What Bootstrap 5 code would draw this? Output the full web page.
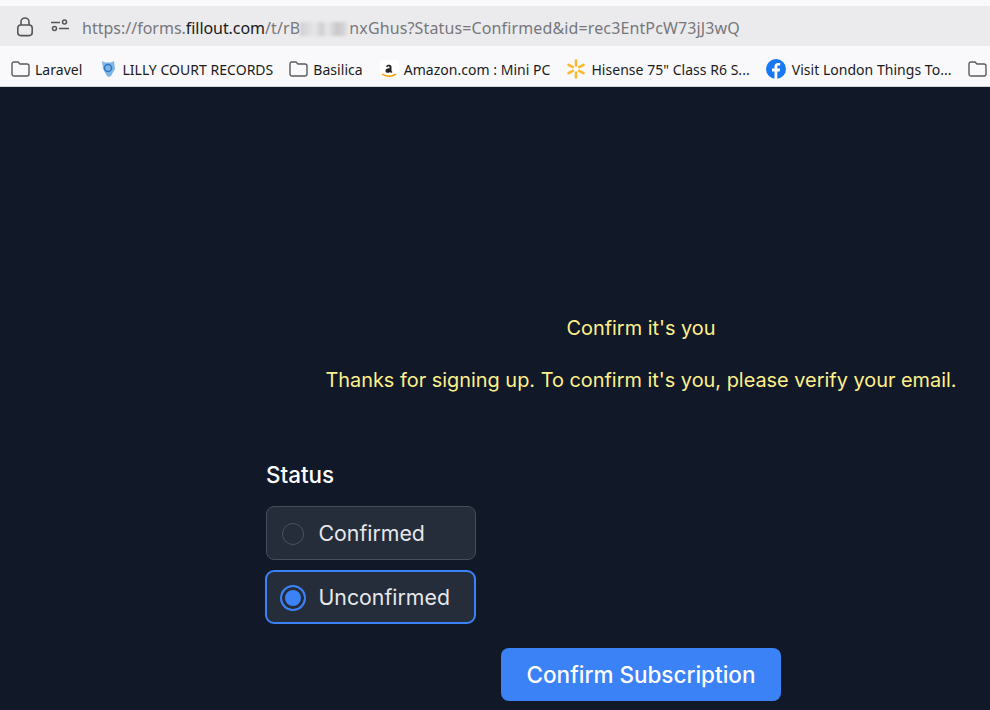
<!DOCTYPE html>
<html lang="en">
<head>
<meta charset="utf-8">
<title>Confirm it's you</title>
<link href="https://cdn.jsdelivr.net/npm/bootstrap@5.3.0/dist/css/bootstrap.min.css" rel="stylesheet">
<style>
html,body{height:710px;overflow:hidden}
body{background:#111827;font-family:"Inter",sans-serif}
.top-strip{height:6px;background:#f9f9fb}
.addr-bar{height:40px;background:#ebebed;padding-left:16px;font-family:"Noto Sans",sans-serif;font-size:16px;color:#77777c;white-space:nowrap}
.addr-bar svg{flex:none}
.addr-url{margin-left:13px;padding-top:3px;letter-spacing:.13px}
.url-start{letter-spacing:0}
.addr-url b{font-weight:400;color:#1a1a1c;letter-spacing:-.07px}
.blurred{display:inline-block;width:49px;height:14px;vertical-align:-2px;background:linear-gradient(90deg,#d0d0d2,#e6e6e8 30%,#cdcdcf 45%,#e8e8ea 55%,#c8c8ca 75%,#d4d4d6 90%,#ebebed);filter:blur(1.5px)}
.marks{height:41px;background:#f9f9fb;border-bottom:1px solid #d4d4d6;padding-left:11px;padding-top:6px;font-family:"Noto Sans",sans-serif;font-size:14px;letter-spacing:.03px;color:#1b1b1d;white-space:nowrap;overflow:hidden}
.mark-item{margin-right:16px;gap:5px}
.mark-first{margin-right:18px}
.mark-lilly{gap:6px}
.mark-basilica{margin-right:17px}
.mark-fb{gap:6px}
.form-col{width:750px;margin-left:266px;padding-top:227px;color:#fff}
.msg{color:#fef08a;font-size:19.9px;line-height:28px;text-align:center}
.msg-head{margin-bottom:24px}
.msg-body{margin-bottom:65px}
.field-label{line-height:32px;font-weight:500;margin-bottom:15px;color:#fff;font-size:22.4px}
.opt{width:210px;height:54px;background:#252c3a;border:1px solid #474d59;border-radius:8px;padding-left:15px;padding-top:1px;gap:14.500px;font-size:21.3px;color:#e5e7eb;margin-bottom:10px}
.opt-on{width:211px;margin-left:-1px;margin-bottom:11px;border:2px solid #3b82f6;border-radius:9px;padding-left:13px;gap:12.500px}
.dot{width:22px;height:22px;border:1px solid #4b515d;border-radius:50%;flex:none}
.dot-on{width:26px;height:26px;border:2px solid #3b82f6;background:#3b82f6;box-shadow:inset 0 0 0 3px #252c3a}
.go-btn{width:280px;height:53px;background:#3b82f6;border:0;border-color:#3b82f6;border-radius:8px;color:#fff;font-size:22.5px;font-weight:500;margin-left:235px;margin-top:13px;padding:0}
</style>
</head>
<body>
<div class="top-strip"></div>
<div class="addr-bar d-flex align-items-center">
  <svg width="19" height="21" viewBox="0 0 19 21" fill="none" stroke="#55555a" stroke-width="1.6"><rect x="1.8" y="9" width="14.4" height="10.6" rx="3"/><path d="M5 9V6a4 4 0 0 1 8 0v3"/></svg>
  <svg class="ms-3" width="18" height="14" viewBox="0 0 18 14" fill="none" stroke="#55555a" stroke-width="1.5"><circle cx="3.5" cy="9.5" r="2"/><circle cx="13.5" cy="3" r="2"/><path d="M0 3.5h9M8 9.5h10"/></svg>
  <span class="addr-url"><span class="url-start">https://forms.</span><b>fillout.com</b>/t/rB<span class="blurred"></span>nxGhus?Status=Confirmed&amp;id=rec3EntPcW73jJ3wQ</span>
</div>
<div class="marks d-flex align-items-center">
  <span class="mark-item mark-first d-inline-flex align-items-center"><svg width="19" height="16" viewBox="0 0 19 16" fill="none" stroke="#5b5b60" stroke-width="1.4"><path d="M1 13V3a2 2 0 0 1 2-2h4l2 2h7a2 2 0 0 1 2 2v8a2 2 0 0 1-2 2H3a2 2 0 0 1-2-2z"/></svg>Laravel</span>
  <span class="mark-item mark-lilly d-inline-flex align-items-center"><svg width="16" height="18" viewBox="0 0 16 18"><path d="M2 1l3 1.500h6l3-1.500 1 8-4 7-2 1-2-1-4-7z" fill="#7fb6e6"/><circle cx="8" cy="8" r="3.500" fill="none" stroke="#2f78c4" stroke-width="1.500"/></svg>LILLY COURT RECORDS</span>
  <span class="mark-item mark-basilica d-inline-flex align-items-center"><svg width="19" height="16" viewBox="0 0 19 16" fill="none" stroke="#5b5b60" stroke-width="1.4"><path d="M1 13V3a2 2 0 0 1 2-2h4l2 2h7a2 2 0 0 1 2 2v8a2 2 0 0 1-2 2H3a2 2 0 0 1-2-2z"/></svg>Basilica</span>
  <span class="mark-item d-inline-flex align-items-center"><svg width="19" height="19" viewBox="0 0 19 19"><rect width="19" height="19" rx="2" fill="#fff"/><path d="M6 6.500c.5-2 5-2.500 5.500 0v4.500l1 1-1.500 1-1-1c-2 1.500-4.500 1-4.500-1.200 0-2 2.500-2.500 4-2.500V7c0-1-1.500-1-2 .2z" fill="#222"/><path d="M2 14c4 3 10 3 14-.2" fill="none" stroke="#f90" stroke-width="1.500"/></svg>Amazon.com : Mini PC</span>
  <span class="mark-item d-inline-flex align-items-center"><svg width="20" height="20" viewBox="0 0 20 20" stroke="#fdb92d" stroke-width="2.600" stroke-linecap="round"><path d="M10 1.500v5M10 13.500v5M2.500 5.800l4.300 2.400M13.200 11.800l4.300 2.400M2.500 14.200l4.300-2.400M13.200 8.200l4.300-2.400"/></svg>Hisense 75" Class R6 S...</span>
  <span class="mark-item mark-fb d-inline-flex align-items-center"><svg width="20" height="20" viewBox="0 0 20 20"><circle cx="10" cy="10" r="10" fill="#1877f2"/><path d="M11.300 20v-7.500h2.400l.4-3h-2.800V8c0-.9.4-1.400 1.500-1.400h1.400V4.100c-.5-.1-1.300-.2-2.100-.2-2.200 0-3.600 1.300-3.600 3.700v1.900H6v3h2.500V20z" fill="#fff"/></svg>Visit London Things To...</span>
  <svg width="19" height="16" viewBox="0 0 19 16" fill="none" stroke="#5b5b60" stroke-width="1.4"><path d="M1 13V3a2 2 0 0 1 2-2h4l2 2h7a2 2 0 0 1 2 2v8a2 2 0 0 1-2 2H3a2 2 0 0 1-2-2z"/></svg>
</div>
<main class="form-col">
  <p class="msg msg-head">Confirm it's you</p>
  <p class="msg msg-body">Thanks for signing up. To confirm it's you, please verify your email.</p>
  <div class="field-label">Status</div>
  <div class="opt d-flex align-items-center"><span class="dot"></span>Confirmed</div>
  <div class="opt opt-on d-flex align-items-center"><span class="dot dot-on"></span>Unconfirmed</div>
  <button type="button" class="btn go-btn">Confirm Subscription</button>
</main>
<script src="https://cdn.jsdelivr.net/npm/bootstrap@5.3.0/dist/js/bootstrap.bundle.min.js"></script>
</body>
</html>
